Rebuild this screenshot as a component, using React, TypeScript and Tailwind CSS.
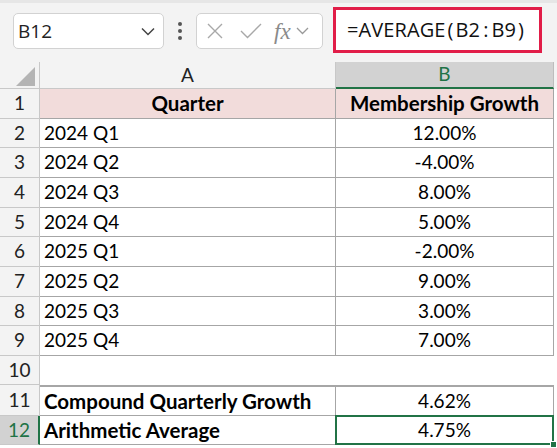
import React from "react";

const rows: { n: number; a: string; b: string; h: string }[] = [
  { n: 2, a: "2024 Q1", b: "12.00%", h: "h-[29px]" },
  { n: 3, a: "2024 Q2", b: "-4.00%", h: "h-[30px]" },
  { n: 4, a: "2024 Q3", b: "8.00%", h: "h-[30px]" },
  { n: 5, a: "2024 Q4", b: "5.00%", h: "h-[29px]" },
  { n: 6, a: "2025 Q1", b: "-2.00%", h: "h-[30px]" },
  { n: 7, a: "2025 Q2", b: "9.00%", h: "h-[30px]" },
  { n: 8, a: "2025 Q3", b: "3.00%", h: "h-[29px]" },
  { n: 9, a: "2025 Q4", b: "7.00%", h: "h-[30px]" },
];

export default function App() {
  return (
    <div className="w-[557px] h-[448px] overflow-hidden bg-white text-black" style={{ fontFamily: "Lato, 'Open Sans', sans-serif" }}>
      {/* toolbar */}
      <div className="h-[62px] bg-[#f3f3f3] border-t-[3px] border-[#e6e6e6] flex items-start pt-[10px] pl-[13px]">
        <div className="w-[151px] h-[36px] bg-white border border-[#d2d2d2] rounded-[5px] flex items-center pl-[4px] pr-[8px]">
          <span className="text-[19px] text-[#222] flex-1" style={{ fontFamily: "'Open Sans', sans-serif" }}>B12</span>
          <svg width="14" height="9" viewBox="0 0 14 9"><path d="M1 1.5 L7 7.5 L13 1.5" fill="none" stroke="#444" strokeWidth="1.5" /></svg>
        </div>
        <div className="w-[32px] h-[36px] flex flex-col items-center justify-center gap-[3px]">
          <div className="w-[4px] h-[4px] bg-[#555] rounded-full" />
          <div className="w-[4px] h-[4px] bg-[#555] rounded-full" />
          <div className="w-[4px] h-[4px] bg-[#555] rounded-full" />
        </div>
        <div className="w-[127px] h-[36px] bg-white border border-[#d2d2d2] rounded-[5px] flex items-center pl-[10px]">
          <svg width="16" height="16" viewBox="0 0 16 16"><path d="M1 1 L15 15 M15 1 L1 15" stroke="#a8a8a8" strokeWidth="1.4" /></svg>
          <svg className="ml-[17px]" width="22" height="16" viewBox="0 0 22 16"><path d="M1 8 L7.5 14.5 L21 1" fill="none" stroke="#a8a8a8" strokeWidth="1.4" /></svg>
          <span className="ml-[12px] text-[23px] italic text-[#8a8a8a] leading-none" style={{ fontFamily: "'Liberation Serif', serif" }}>fx</span>
          <svg className="ml-[5px]" width="13" height="8" viewBox="0 0 13 8"><path d="M1 1 L6.5 6.5 L12 1" fill="none" stroke="#999" strokeWidth="1.3" /></svg>
        </div>
        <div className="ml-[10px] -mt-[6px] w-[209px] h-[46px] bg-white border-[3px] border-[#e11d48] flex items-center pl-[11px]">
          <span className="text-[20px] text-[#111] tracking-[0.1px]" style={{ fontFamily: "'Open Sans', sans-serif" }}>
            =AVERAGE<span className="mx-[2px]">(</span>B2<span className="mx-[3px]">:</span>B9<span className="ml-[2px]">)</span>
          </span>
        </div>
      </div>

      {/* column header row */}
      <div className="flex h-[27px]">
        <div className="w-[40px] bg-[#f3f3f3] border-r border-b border-[#c8c8c8] relative">
          <svg className="absolute left-[16px] top-[5px]" width="19" height="19" viewBox="0 0 19 19"><path d="M19 0 L19 19 L0 19 Z" fill="#b4b4b4" /></svg>
        </div>
        <div className="w-[296px] bg-[#f3f3f3] border-r border-b border-[#c8c8c8] flex items-center justify-center text-[19px] text-[#222]">A</div>
        <div className="w-[218px] bg-[#d2d2d2] border-r border-[#bdbdbd] border-b-2 border-b-[#217346] flex items-center justify-center text-[19px] text-[#217346]">B</div>
        <div className="flex-1 bg-[#f3f3f3]" />
      </div>

      {/* row 1 */}
      <div className="flex h-[30px]">
        <div className="w-[40px] bg-[#f3f3f3] border-r border-b border-[#c8c8c8] flex items-center justify-center text-[19px] text-[#222]">1</div>
        <div className="w-[296px] bg-[#f2dcdb] border-r border-b border-[#a6a6a6] flex items-center justify-center text-[20.5px] font-bold">Quarter</div>
        <div className="w-[218px] bg-[#f2dcdb] border-r border-b border-[#a6a6a6] flex items-center justify-center text-[20.5px] font-bold">Membership Growth</div>
        <div className="flex-1" />
      </div>

      {rows.map((r) => (
        <div key={r.n} className={`flex ${r.h}`}>
          <div className="w-[40px] bg-[#f3f3f3] border-r border-b border-[#c8c8c8] flex items-center justify-center text-[19px] text-[#222]">{r.n}</div>
          <div className="w-[296px] border-r border-b border-[#a6a6a6] flex items-center pl-[4px] text-[19px]">{r.a}</div>
          <div className="w-[218px] border-r border-b border-[#a6a6a6] flex items-center justify-center text-[19px]">{r.b}</div>
          <div className="flex-1" />
        </div>
      ))}

      {/* row 10 */}
      <div className="flex h-[29px]">
        <div className="w-[40px] bg-[#f3f3f3] border-r border-b border-[#c8c8c8] flex items-center justify-center text-[19px] text-[#222]">10</div>
        <div className="flex-1" />
      </div>

      {/* row 11 */}
      <div className="flex h-[31px]">
        <div className="w-[40px] bg-[#f3f3f3] border-r border-b border-[#c8c8c8] flex items-center justify-center text-[19px] text-[#222]">11</div>
        <div className="w-[296px] border-t-2 border-r border-b border-[#a6a6a6] flex items-center pl-[4px] text-[20.5px] font-bold">Compound Quarterly Growth</div>
        <div className="w-[218px] border-t-2 border-r border-b border-[#a6a6a6] flex items-center justify-center text-[19px]">4.62%</div>
        <div className="flex-1" />
      </div>

      {/* row 12 */}
      <div className="flex h-[29px]">
        <div className="w-[40px] bg-[#d2d2d2] border-r-2 border-r-[#217346] border-b border-b-[#c8c8c8] flex items-center justify-center text-[19px] text-[#217346]">12</div>
        <div className="w-[295px] border-b border-[#a6a6a6] flex items-center pl-[4px] text-[20.5px] font-bold">Arithmetic Average</div>
        <div className="w-[219px] border-2 border-[#217346] -mt-[1px] flex items-center justify-center text-[19px] relative">
          4.75%
          <div className="absolute -right-[5px] -bottom-[5px] w-[7px] h-[7px] bg-[#217346] border border-white" />
        </div>
        <div className="flex-1" />
      </div>
    </div>
  );
}
